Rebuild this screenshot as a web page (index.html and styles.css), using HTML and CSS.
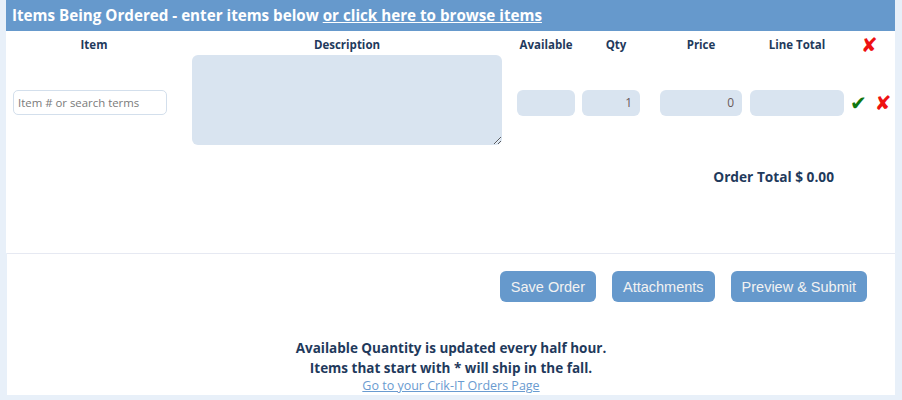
FILE: index.html
```html
<!DOCTYPE html>
<html lang="en">
<head>
<meta charset="utf-8">
<title>Items Being Ordered</title>
<link rel="stylesheet" href="styles.css">
</head>
<body>
<div class="page">
  <div class="title-bar">Items Being Ordered - enter items below <a href="#" class="title-link">or click here to browse items</a></div>
  <div class="items">
    <div class="items-grid">
      <div class="col-head">Item</div>
      <div class="col-head">Description</div>
      <div class="col-head">Available</div>
      <div class="col-head">Qty</div>
      <div class="col-head">Price</div>
      <div class="col-head">Line Total</div>
      <div class="col-head"><span class="icon-x">✘</span></div>

      <div class="cell"><input class="item-input" type="text" placeholder="Item # or search terms"></div>
      <div class="cell cell-desc"><textarea class="desc-input"></textarea></div>
      <div class="cell cell-center"><input class="field field-avail" type="text"></div>
      <div class="cell"><input class="field field-qty" type="text" value="1"></div>
      <div class="cell cell-center"><input class="field field-price" type="text" value="0"></div>
      <div class="cell cell-center"><input class="field field-total" type="text"></div>
      <div class="cell cell-icons"><span class="icon-check">✔</span><span class="icon-x">✘</span></div>
    </div>
    <div class="order-total">Order Total $ 0.00</div>
  </div>
  <div class="actions">
    <div class="buttons">
      <button class="btn" type="button">Save Order</button>
      <button class="btn" type="button">Attachments</button>
      <button class="btn" type="button">Preview &amp; Submit</button>
    </div>
    <div class="notes">
      <p class="note">Available Quantity is updated every half hour.</p>
      <p class="note">Items that start with * will ship in the fall.</p>
      <a href="#" class="orders-link">Go to your Crik-IT Orders Page</a>
    </div>
  </div>
</div>
</body>
</html>
```

FILE: styles.css
```css
* { box-sizing: border-box; }

body {
  margin: 0;
  background: #e8f0f9;
  font-family: "Open Sans", "Noto Sans", sans-serif;
  color: #1f3a5c;
}

.page {
  margin-left: 6px;
  width: 889px;
}

.title-bar {
  height: 31px;
  line-height: 31px;
  background: #6699cc;
  color: #ffffff;
  font-weight: bold;
  font-size: 15.2px;
  padding-left: 6px;
  white-space: nowrap;
}

.title-link {
  color: #ffffff;
  text-decoration: underline;
}

.items {
  background: #ffffff;
  height: 222px;
  padding-top: 4px;
}

.items-grid {
  display: grid;
  grid-template-columns: 176px 330px 68px 72px 98px 94px 51px;
  grid-template-rows: 20px 90px;
}

.col-head {
  text-align: center;
  font-weight: bold;
  font-size: 11.5px;
  line-height: 20px;
  color: #1f3a5c;
}

.cell {
  display: flex;
  align-items: center;
  padding-top: 5px;
}

.cell-center { justify-content: center; }

.cell-desc {
  justify-content: center;
  align-items: flex-start;
  padding-top: 0;
}

.item-input {
  margin-left: 7px;
  width: 154px;
  height: 25px;
  border: 1px solid #d3dfec;
  border-radius: 5px;
  background: #ffffff;
  font-family: inherit;
  font-size: 11.4px;
  padding: 0 4px;
  color: #555;
}

.item-input::placeholder { color: #7a7a7a; }

.desc-input {
  width: 310px;
  height: 90px;
  border: none;
  border-radius: 6px;
  background: #d9e4f0;
  font-family: inherit;
}

.field {
  height: 26px;
  border: none;
  border-radius: 6px;
  background: #d9e4f0;
  font-family: inherit;
  font-size: 12px;
  text-align: right;
  padding: 0 8px;
  color: #6a5a5a;
}

.field-avail { width: 58px; }
.field-qty { width: 58px; margin-left: 2px; }
.field-price { width: 82px; }
.field-total { width: 94px; }

.cell-icons {
  padding-left: 6px;
  gap: 8px;
}

.icon-x {
  color: #ee1111;
  font-family: "DejaVu Sans", sans-serif;
  font-size: 20px;
  line-height: 20px;
}

.icon-check {
  color: #117711;
  font-family: "DejaVu Sans", sans-serif;
  font-size: 20px;
  line-height: 20px;
}

.order-total {
  margin-top: 23px;
  text-align: right;
  padding-right: 61px;
  font-weight: bold;
  font-size: 13.7px;
  line-height: 18px;
  color: #1f3a5c;
}

.actions {
  background: #ffffff;
  border-top: 1px solid #e6e9f2;
  margin-left: 1px;
  height: 142px;
  padding-top: 17px;
}

.buttons {
  display: flex;
  justify-content: flex-end;
  gap: 16px;
  padding-right: 28px;
}

.btn {
  height: 31px;
  padding: 0 11px;
  border: none;
  border-radius: 6px;
  background: #6699cc;
  color: #f2f2f2;
  font-family: "Liberation Sans", Arial, sans-serif;
  font-size: 14.5px;
}

.notes {
  margin-top: 36px;
  text-align: center;
}

.note {
  margin: 0;
  font-weight: bold;
  font-size: 13.5px;
  line-height: 20px;
  color: #1f3a5c;
}

.orders-link {
  display: block;
  font-size: 12.5px;
  line-height: 16px;
  color: #6a9bd0;
  text-decoration: underline;
}
```
